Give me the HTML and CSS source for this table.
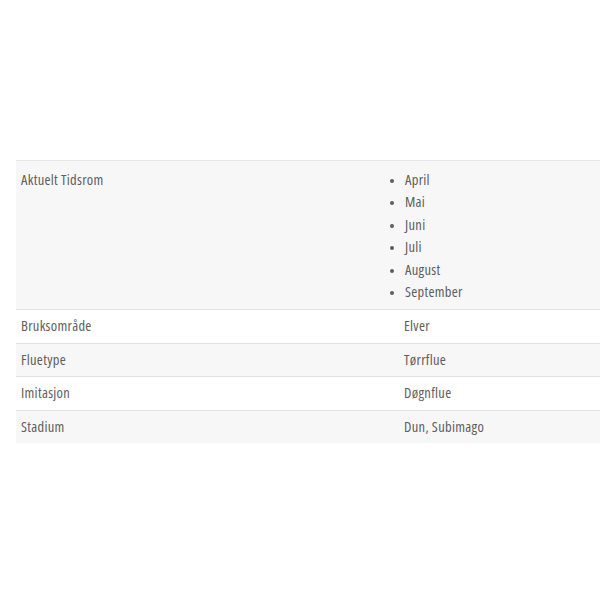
FILE: index.html
```html
<!DOCTYPE html>
<html>
<head>
<meta charset="utf-8">
<link rel="stylesheet" href="styles.css">
</head>
<body>
<div class="wrap">
<table class="attrs">
<tbody>
<tr class="odd first">
<th>Aktuelt Tidsrom</th>
<td><ul class="months"><li>April</li><li>Mai</li><li>Juni</li><li>Juli</li><li>August</li><li>September</li></ul></td>
</tr>
<tr class="even"><th>Bruksområde</th><td>Elver</td></tr>
<tr class="odd"><th>Fluetype</th><td>Tørrflue</td></tr>
<tr class="even"><th>Imitasjon</th><td>Døgnflue</td></tr>
<tr class="odd"><th>Stadium</th><td>Dun, Subimago</td></tr>
</tbody>
</table>
</div>
</body>
</html>
```

FILE: styles.css
```css
html, body {
  margin: 0;
  padding: 0;
  background: #fff;
}
.wrap {
  padding: 160px 0 0 16px;
  overflow: hidden;
}
.attrs {
  border-collapse: collapse;
  width: 620px;
  font-family: "Open Sans", sans-serif;
  font-stretch: 75%;
  font-size: 14.5px;
  letter-spacing: 0.3px;
  line-height: 22.5px;
  color: #5e5e5e;
  border-top: 1px solid #e6e6e6;
}
.attrs tr {
  border-bottom: 1px solid #e2e2e2;
}
.attrs tr:last-child {
  border-bottom: none;
}
.attrs tr.odd {
  background: #f7f7f7;
}
.attrs tr.even {
  background: #fff;
}
.attrs th, .attrs td {
  text-align: left;
  font-weight: normal;
  vertical-align: top;
  padding: 5px 5px;
}
.attrs tr.first th, .attrs tr.first td {
  padding-top: 7.5px;
  padding-bottom: 5.5px;
}
.attrs th {
  width: 373px;
}
.months {
  margin: 0;
  padding: 0 0 0 1px;
  list-style: disc;
}
.months li::marker {
  font-size: 12px;
}
```
